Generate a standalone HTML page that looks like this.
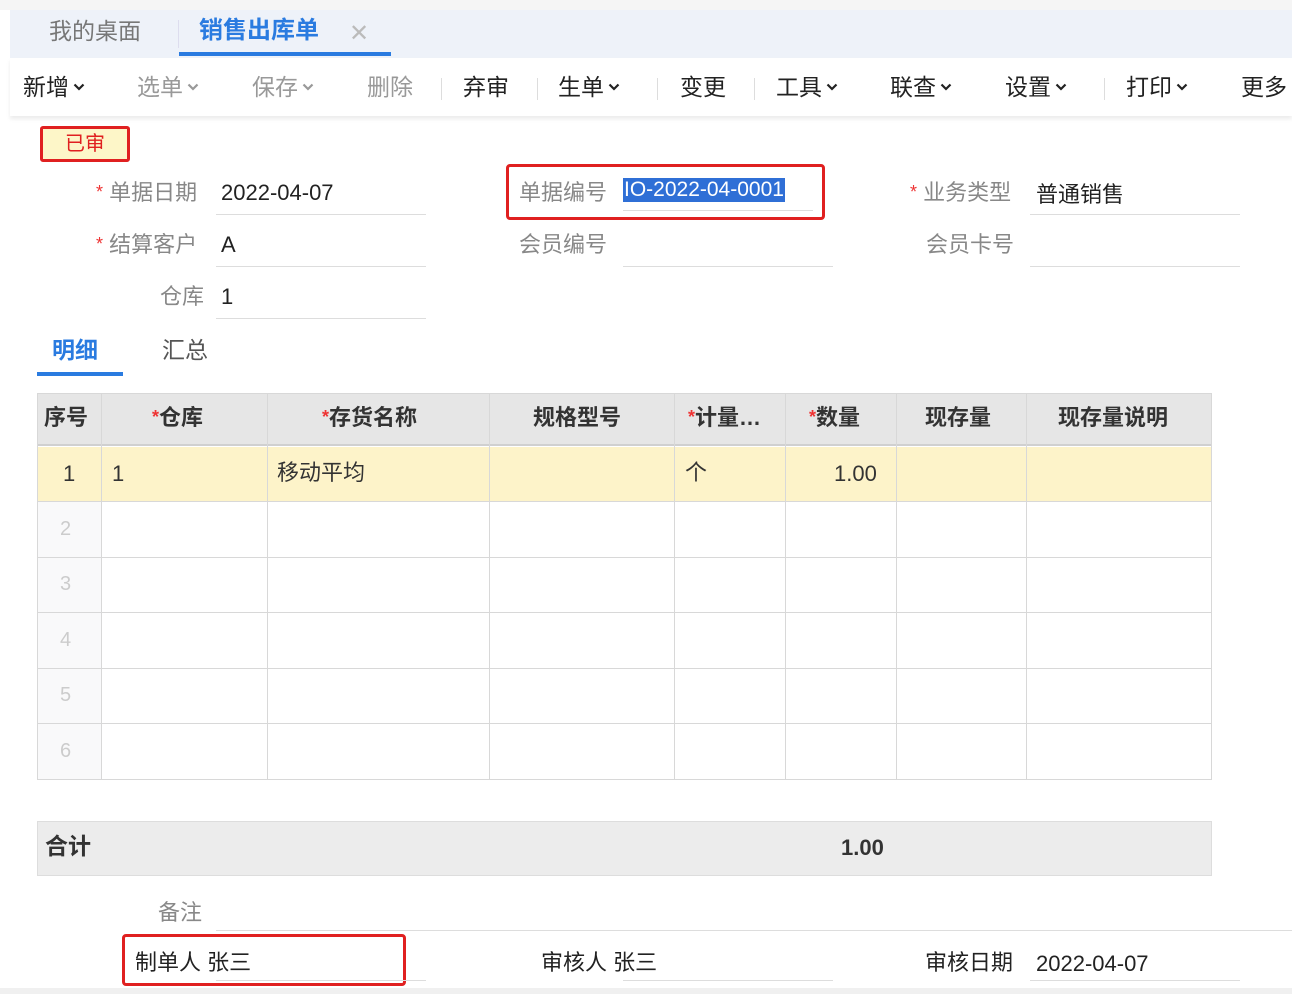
<!DOCTYPE html>
<html><head><meta charset="utf-8"><style>
*{margin:0;padding:0;box-sizing:border-box}
body{width:1292px;height:994px;overflow:hidden;background:#fff;font-family:"Liberation Sans","Noto Sans CJK SC",sans-serif;color:#222;position:relative}
.a{position:absolute;white-space:nowrap;line-height:1.15}
.top{left:0;top:0;width:1292px;height:10px;background:#f5f5f5}
.tabs{left:10px;top:10px;width:1282px;height:48px;background:#eef2f9}
.tb{left:10px;top:58px;width:1282px;height:58px;background:#fff;box-shadow:0 3px 4px rgba(0,0,0,.08)}
.t{font-size:23px;top:74px}
.g{color:#999}
.sep{top:78px;width:1px;height:22px;background:#ddd}
.lbl{font-size:22px;color:#888}
.val{font-size:22px;color:#222}
.ul{height:1px;background:#ddd}
.st{color:#e33;font-size:18px;vertical-align:2px}
.cv{display:inline-block;width:12px;height:10px;margin-left:4px;vertical-align:3px}
</style></head><body>
<svg width="0" height="0" style="position:absolute"><defs><symbol id="cv" viewBox="0 0 12 10"><path d="M1.5 2.5 L6 7 L10.5 2.5" fill="none" stroke="currentColor" stroke-width="2.2"/></symbol></defs></svg>
<div class="a top"></div>
<div class="a tabs"></div>
<div class="a" style="left:49px;top:18px;font-size:23px;color:#777">我的桌面</div>
<div class="a" style="left:178px;top:20px;width:1px;height:28px;background:#dde"></div>
<div class="a" style="left:199px;top:17px;font-size:24px;color:#2a7be0;font-weight:bold">销售出库单</div>
<div class="a" style="left:349px;top:20px;font-size:24px;color:#bbb">✕</div>
<div class="a" style="left:179px;top:52px;width:212px;height:4px;background:#2a7be0"></div>
<div class="a tb"></div>
<div class="a t" style="left:23px">新增<svg class="cv"><use href="#cv"/></svg></div>
<div class="a t g" style="left:137px">选单<svg class="cv"><use href="#cv"/></svg></div>
<div class="a t g" style="left:252px">保存<svg class="cv"><use href="#cv"/></svg></div>
<div class="a t g" style="left:367px">删除</div>
<div class="a sep" style="left:441px"></div>
<div class="a t" style="left:463px">弃审</div>
<div class="a sep" style="left:537px"></div>
<div class="a t" style="left:558px">生单<svg class="cv"><use href="#cv"/></svg></div>
<div class="a sep" style="left:657px"></div>
<div class="a t" style="left:680px">变更</div>
<div class="a sep" style="left:754px"></div>
<div class="a t" style="left:776px">工具<svg class="cv"><use href="#cv"/></svg></div>
<div class="a t" style="left:890px">联查<svg class="cv"><use href="#cv"/></svg></div>
<div class="a t" style="left:1005px">设置<svg class="cv"><use href="#cv"/></svg></div>
<div class="a sep" style="left:1104px"></div>
<div class="a t" style="left:1126px">打印<svg class="cv"><use href="#cv"/></svg></div>
<div class="a t" style="left:1241px">更多</div>

<div class="a" style="left:40px;top:126px;width:90px;height:36px;border:3px solid #e02020;border-radius:3px;background:#fdf6c8;color:#e02020;font-size:20px;text-align:center;line-height:30px">已审</div>

<div class="a lbl" style="left:96px;top:180px"><span class="st">*</span> 单据日期</div>
<div class="a val" style="left:221px;top:180px">2022-04-07</div>
<div class="a ul" style="left:216px;top:214px;width:210px"></div>
<div class="a" style="left:506px;top:164px;width:319px;height:56px;border:3px solid #e02020;border-radius:4px"></div>
<div class="a lbl" style="left:519px;top:180px">单据编号</div>
<div class="a" style="left:623px;top:178px;font-size:21px;background:#2f6fd6;color:#fff;padding:0 1px">IO-2022-04-0001</div>
<div class="a ul" style="left:623px;top:210px;width:190px"></div>
<div class="a lbl" style="left:910px;top:180px"><span class="st">*</span> 业务类型</div>
<div class="a val" style="left:1036px;top:182px">普通销售</div>
<div class="a ul" style="left:1030px;top:214px;width:210px"></div>

<div class="a lbl" style="left:96px;top:232px"><span class="st">*</span> 结算客户</div>
<div class="a val" style="left:221px;top:232px">A</div>
<div class="a ul" style="left:216px;top:266px;width:210px"></div>
<div class="a lbl" style="left:519px;top:232px">会员编号</div>
<div class="a ul" style="left:623px;top:266px;width:210px"></div>
<div class="a lbl" style="left:926px;top:232px">会员卡号</div>
<div class="a ul" style="left:1030px;top:266px;width:210px"></div>

<div class="a lbl" style="left:160px;top:284px">仓库</div>
<div class="a val" style="left:221px;top:284px">1</div>
<div class="a ul" style="left:216px;top:318px;width:210px"></div>

<div class="a" style="left:52px;top:337px;font-size:23px;color:#2a7be0;font-weight:bold">明细</div>
<div class="a" style="left:37px;top:372px;width:86px;height:4px;background:#2a7be0"></div>
<div class="a" style="left:162px;top:337px;font-size:23px;color:#555">汇总</div>

<div class="a" style="left:37px;top:393px;width:1175px;height:387px;border:1px solid #d8d8d8;background:#fff"></div>
<div class="a" style="left:38px;top:394px;width:1173px;height:52px;background:#e6e6e6;border-bottom:2px solid #d0d0d0"></div>
<div class="a" style="left:38px;top:447px;width:1173px;height:54px;background:#fdf3c9"></div>
<div class="a" style="left:38px;top:501px;width:1173px;height:278px;background:#f9f9fa"></div>
<div class="a" style="left:101px;top:501px;width:1110px;height:278px;background:#fff"></div>
<div class="a ul" style="left:38px;top:501px;width:1173px;background:#d8d8d8"></div>
<div class="a ul" style="left:38px;top:557px;width:1173px;background:#d8d8d8"></div>
<div class="a ul" style="left:38px;top:612px;width:1173px;background:#d8d8d8"></div>
<div class="a ul" style="left:38px;top:668px;width:1173px;background:#d8d8d8"></div>
<div class="a ul" style="left:38px;top:723px;width:1173px;background:#d8d8d8"></div>
<div class="a" style="left:101px;top:394px;width:1px;height:385px;background:#d8d8d8"></div>
<div class="a" style="left:267px;top:394px;width:1px;height:385px;background:#d8d8d8"></div>
<div class="a" style="left:489px;top:394px;width:1px;height:385px;background:#d8d8d8"></div>
<div class="a" style="left:674px;top:394px;width:1px;height:385px;background:#d8d8d8"></div>
<div class="a" style="left:785px;top:394px;width:1px;height:385px;background:#d8d8d8"></div>
<div class="a" style="left:896px;top:394px;width:1px;height:385px;background:#d8d8d8"></div>
<div class="a" style="left:1026px;top:394px;width:1px;height:385px;background:#d8d8d8"></div>
<div style="font-size:22px;font-weight:bold;color:#333">
<div class="a" style="left:44px;top:405px">序号</div>
<div class="a" style="left:152px;top:405px"><span class="st">*</span>仓库</div>
<div class="a" style="left:322px;top:405px"><span class="st">*</span>存货名称</div>
<div class="a" style="left:533px;top:405px">规格型号</div>
<div class="a" style="left:688px;top:405px"><span class="st">*</span>计量…</div>
<div class="a" style="left:809px;top:405px"><span class="st">*</span>数量</div>
<div class="a" style="left:925px;top:405px">现存量</div>
<div class="a" style="left:1058px;top:405px">现存量说明</div>
</div>
<div style="font-size:22px;color:#333">
<div class="a" style="left:63px;top:461px">1</div>
<div class="a" style="left:112px;top:461px">1</div>
<div class="a" style="left:277px;top:460px">移动平均</div>
<div class="a" style="left:685px;top:460px">个</div>
<div class="a" style="left:834px;top:461px">1.00</div>
</div>
<div style="font-size:20px;color:#ccc">
<div class="a" style="left:60px;top:518px">2</div>
<div class="a" style="left:60px;top:573px">3</div>
<div class="a" style="left:60px;top:629px">4</div>
<div class="a" style="left:60px;top:684px">5</div>
<div class="a" style="left:60px;top:740px">6</div>
</div>

<div class="a" style="left:37px;top:821px;width:1175px;height:55px;background:#ececec;border:1px solid #ddd"></div>
<div class="a" style="left:45px;top:833px;font-size:23px;font-weight:bold;color:#333">合计</div>
<div class="a" style="left:841px;top:835px;font-size:22px;font-weight:bold;color:#333">1.00</div>

<div class="a lbl" style="left:158px;top:900px">备注</div>
<div class="a ul" style="left:216px;top:930px;width:1076px"></div>
<div class="a" style="left:122px;top:934px;width:284px;height:52px;border:3px solid #e02020;border-radius:4px"></div>
<div class="a val" style="left:135px;top:950px">制单人 张三</div>
<div class="a ul" style="left:216px;top:980px;width:210px"></div>
<div class="a val" style="left:541px;top:950px">审核人 张三</div>
<div class="a ul" style="left:623px;top:980px;width:210px"></div>
<div class="a val" style="left:925px;top:950px">审核日期</div>
<div class="a val" style="left:1036px;top:951px">2022-04-07</div>
<div class="a ul" style="left:1030px;top:980px;width:210px"></div>
<div class="a" style="left:0;top:988px;width:1292px;height:6px;background:#f0f0f0"></div>
</body></html>
